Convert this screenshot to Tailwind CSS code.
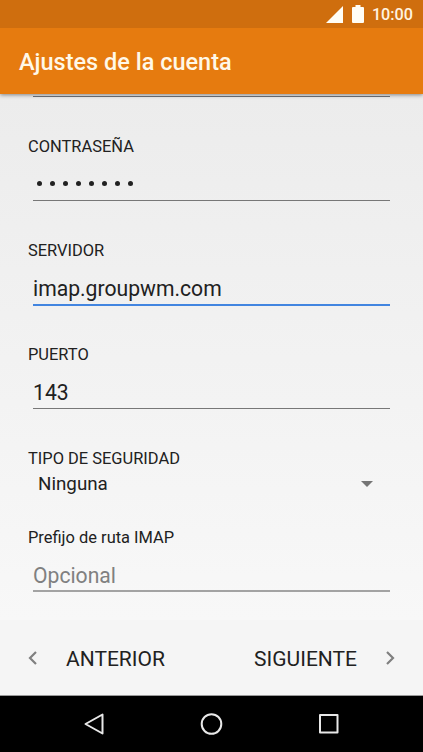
<!DOCTYPE html>
<html lang="es">
<head>
<meta charset="utf-8">
<title>Ajustes de la cuenta</title>
<script src="https://cdn.jsdelivr.net/npm/@tailwindcss/browser@4"></script>
</head>
<body class="h-[752px] w-[423px] overflow-hidden bg-black font-['Roboto',sans-serif] text-[#212121]">
<div class="flex h-full flex-col">
  <div class="relative z-20 flex h-7 shrink-0 items-center justify-end bg-[#cf6e0e] pr-[10px] text-[#fff3e0]">
    <svg class="mr-[9px] h-[17px] w-[17px]" viewBox="0 0 17 17" fill="#fffdf5"><path d="M17 0v17H0z"/></svg>
    <svg class="mr-[8px] h-[18px] w-[12px]" viewBox="0 0 12 18" fill="#fffdf5"><path d="M3.500 0h5v2H11a1 1 0 0 1 1 1v14a1 1 0 0 1-1 1H1a1 1 0 0 1-1-1V3a1 1 0 0 1 1-1h2.500z"/></svg>
    <span class="pt-[2px] text-[16.2px] leading-5 font-medium">10:00</span>
  </div>
  <header class="relative z-10 flex h-[66px] shrink-0 items-center bg-[#e67b0f] pl-[19px] pt-[2px] shadow-[0_1px_4px_rgba(0,0,0,0.45)]">
    <h1 class="text-[23.5px] leading-7 font-medium text-[#fff8e8]">Ajustes de la cuenta</h1>
  </header>
  <main class="flex h-[526px] shrink-0 flex-col bg-linear-to-b from-[#ececec] to-[#f8f8f8] pr-[33px] pl-7">
    <div class="ml-[5px] h-[3px] shrink-0 border-b border-[#70757a]"></div>
    <label class="flex h-[104px] shrink-0 flex-col pt-10">
      <span class="text-[16.45px] leading-5">CONTRASEÑA</span>
      <span class="ml-[5px] flex h-11 items-center gap-2 border-b border-[#777] pt-[10px] pl-[3.500px]">
        <i class="size-[5px] rounded-full bg-[#212121]"></i><i class="size-[5px] rounded-full bg-[#212121]"></i><i class="size-[5px] rounded-full bg-[#212121]"></i><i class="size-[5px] rounded-full bg-[#212121]"></i><i class="size-[5px] rounded-full bg-[#212121]"></i><i class="size-[5px] rounded-full bg-[#212121]"></i><i class="size-[5px] rounded-full bg-[#212121]"></i><i class="size-[5px] rounded-full bg-[#212121]"></i>
      </span>
    </label>
    <label class="flex h-[104px] shrink-0 flex-col pt-10">
      <span class="text-[16.45px] leading-5">SERVIDOR</span>
      <span class="ml-[5px] h-[45px] shrink-0 border-b-2 border-[#4285e0] pt-4 text-[21.15px] leading-6">imap.groupwm.com</span>
    </label>
    <label class="flex h-[104px] shrink-0 flex-col pt-10">
      <span class="text-[16.45px] leading-5">PUERTO</span>
      <span class="ml-[5px] h-11 border-b border-[#777] pt-4 text-[21.15px] leading-6">143</span>
    </label>
    <div class="flex h-[79px] shrink-0 flex-col pt-10">
      <span class="text-[16.45px] leading-5">TIPO DE SEGURIDAD</span>
      <div class="flex items-center justify-between pt-[3px] pr-[17px] pl-[10px]">
        <span class="text-[18.8px] leading-6">Ninguna</span>
        <svg class="h-[6px] w-[12px]" viewBox="0 0 12 6" fill="#757575"><path d="M0 0h12L6 6z"/></svg>
      </div>
    </div>
    <label class="flex h-[104px] shrink-0 flex-col pt-10">
      <span class="text-[16.45px] leading-5">Prefijo de ruta IMAP</span>
      <span class="ml-[5px] h-11 border-b-2 border-[#a3a3a3] pt-4 text-[21.15px] leading-6 text-[#808080]">Opcional</span>
    </label>
  </main>
  <div class="flex h-[76px] shrink-0 items-center justify-between border-b border-[#999] bg-[#f5f5f5] pr-7 pl-7 text-[21px]">
    <div class="flex items-center gap-[28px]">
      <svg class="h-[14px] w-[10px]" viewBox="0 0 10 14" fill="none" stroke="#808080" stroke-width="2.2"><path d="M8 1L2 7l6 6"/></svg>
      <span class="pt-[3px] leading-6">ANTERIOR</span>
    </div>
    <div class="flex items-center gap-[28px]">
      <span class="pt-[3px] leading-6">SIGUIENTE</span>
      <svg class="h-[14px] w-[10px]" viewBox="0 0 10 14" fill="none" stroke="#808080" stroke-width="2.2"><path d="M2 1l6 6-6 6"/></svg>
    </div>
  </div>
  <nav class="flex h-14 shrink-0 items-center justify-between bg-black pr-[82px] pl-[82px]">
    <svg class="size-6" viewBox="0 0 24 24" fill="none" stroke="#e8e8e8" stroke-width="2" stroke-linejoin="round"><path d="M20.500 2.500v19L3.500 12z"/></svg>
    <svg class="size-6" viewBox="0 0 24 24" fill="none" stroke="#e8e8e8" stroke-width="2"><circle cx="11.500" cy="12" r="9.800"/></svg>
    <svg class="size-6" viewBox="0 0 24 24" fill="none" stroke="#e8e8e8" stroke-width="2" stroke-linejoin="round"><path d="M3 3h17.500v17.500h-17.500z"/></svg>
  </nav>
</div>
</body>
</html>
